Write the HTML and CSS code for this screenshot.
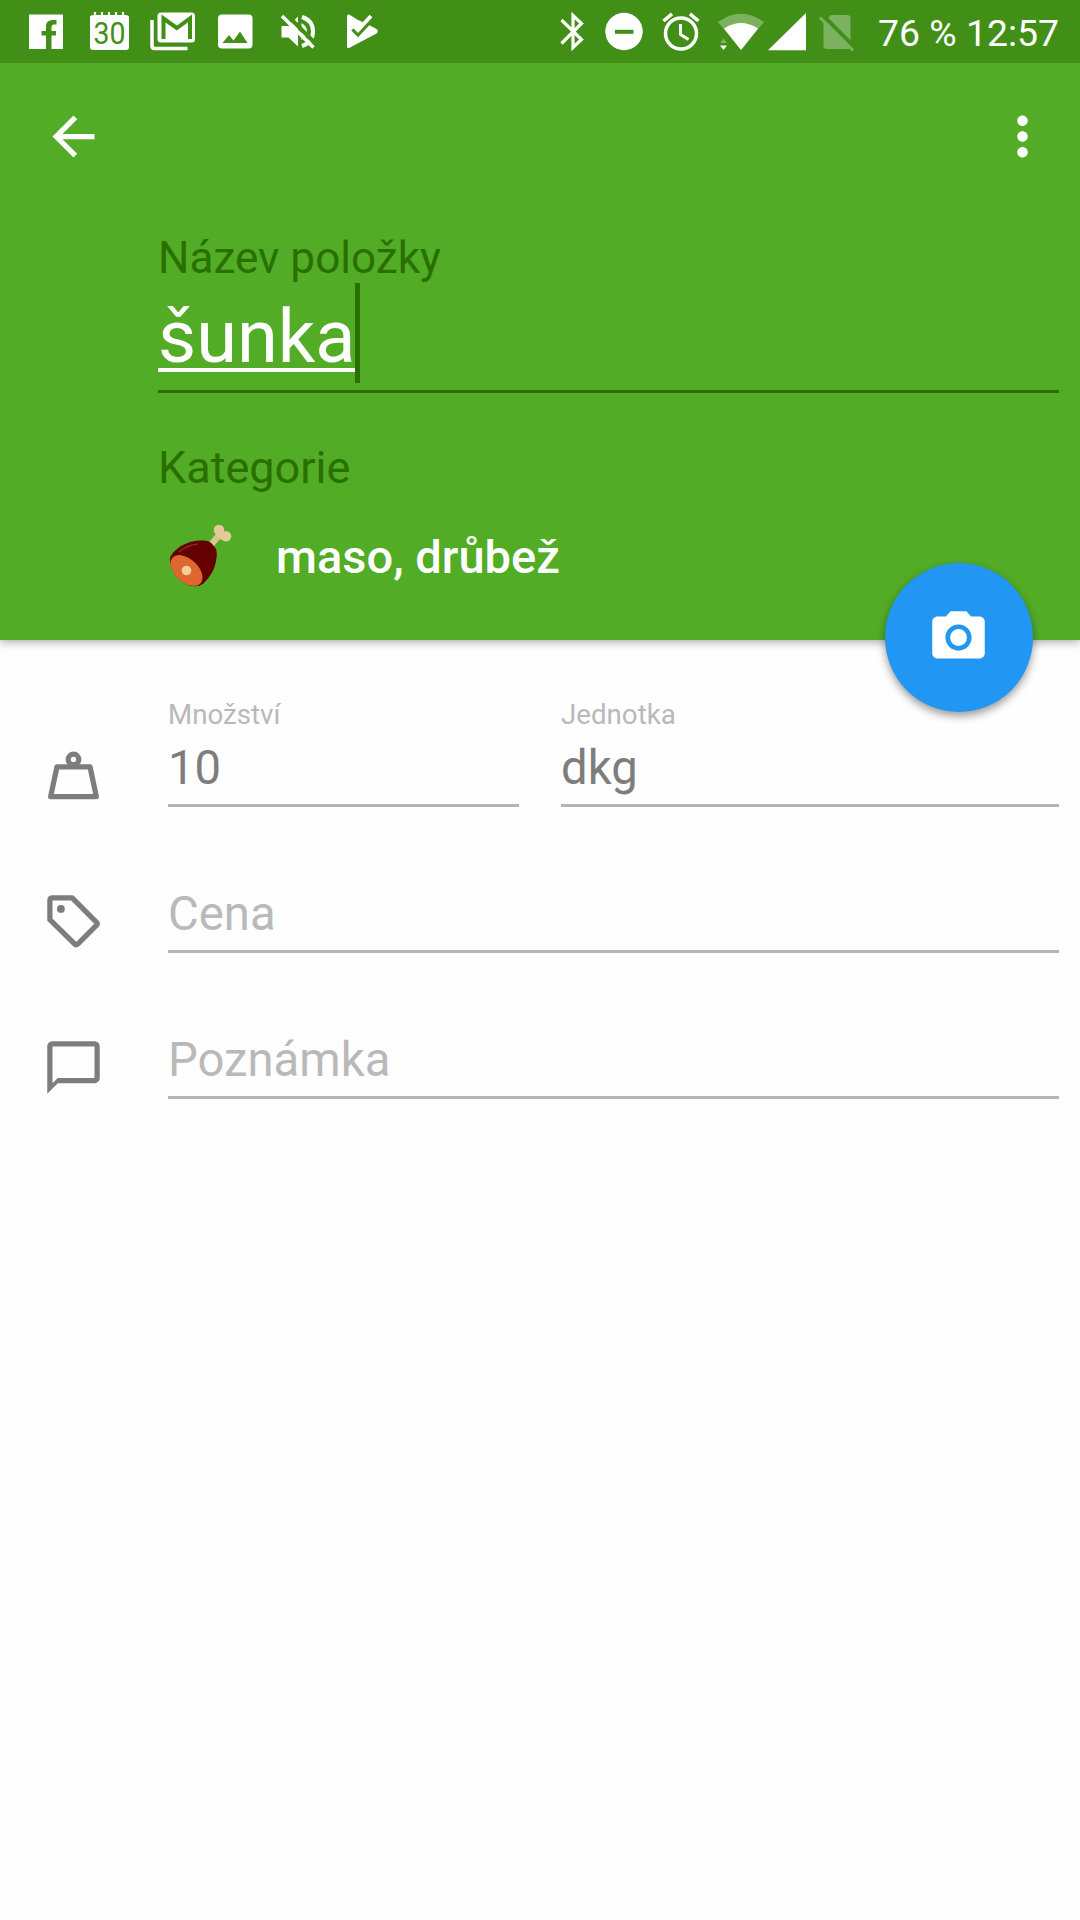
FILE: index.html
```html
<!DOCTYPE html>
<html lang="cs">
<head>
    <meta charset="UTF-8">
    <meta name="viewport" content="width=device-width, initial-scale=1.0">
    <title>Položka</title>
    <link rel="stylesheet" href="styles.css">
</head>
<body>
    <header class="header">
        <div class="status-bar">
            <div class="status-left">
                <svg viewBox="0 0 63 63"><path fill="#fff" d="M14 14.500h34v34.500h-11.500v-13.500h4.500v-4.500h-4.500v-3.500q0-3 2.500-3h2.500v-4.500h-4q-6.500 0-6.500 6.500v4.500h-4.500v4.500h4.500v13.500h-17z"/></svg>
                <svg viewBox="0 0 63 63">
                    <path fill="#fff" d="M16 15h31q4 0 4 2v30q0 3-3 3H15q-3 0-3-3V17q0-2 4-2z"/>
                    <path stroke="#fff" stroke-width="2.200" d="M17 12v4M24 12v4M31 12v4M38 12v4M45 12v4"/>
                    <text x="15.500" y="44" textLength="32" lengthAdjust="spacingAndGlyphs" class="cal-day">30</text>
                </svg>
                <svg viewBox="0 0 63 63">
                    <rect x="16.500" y="12.500" width="37.500" height="30" rx="3.500" fill="#fff"/>
                    <path fill="none" stroke="#fff" stroke-width="3.500" d="M11 20v26q0 2.500 2.500 2.500H46.500"/>
                    <path fill="none" stroke="#428f18" stroke-width="4" d="M22.500 39V18.500l13.300 9.500 13.200-9.500V39"/>
                </svg>
                <svg viewBox="0 0 63 63">
                    <rect x="14" y="14.500" width="34.500" height="34" rx="4" fill="#fff"/>
                    <path fill="#428f18" d="M18.500 43l6.500-8 4.500 5.500 6.500-9 7.500 11.500z"/>
                </svg>
                <svg viewBox="0 0 63 63">
                    <path fill="#fff" d="M14.500 26h7l9.500-9.500V46.500l-9.500-9h-7z"/>
                    <path fill="none" stroke="#fff" stroke-width="4" d="M35 17q11 3.500 11 14.500T35 46"/>
                    <path fill="#fff" d="M34.500 23q5.500 3 5.500 8.500t-5.500 8.500z"/>
                    <path stroke="#428f18" stroke-width="4" d="M18 13l32 32"/>
                    <path stroke="#fff" stroke-width="3.500" d="M15 16l31.500 31.500"/>
                </svg>
                <svg viewBox="0 0 63 63">
                    <path fill="#fff" d="M17 16.500q0-3 3-1.500l8 5 9 4 9.500 5q2.500 2 0 4.500L20 47.500q-3 2-3-1.500z"/>
                    <path fill="none" stroke="#428f18" stroke-width="3.500" d="M22.500 29.300l5.500 5.500 14.500-15.500"/>
                    <path fill="none" stroke="#fff" stroke-width="4" d="M23 25l5 5L41 16"/>
                </svg>
            </div>
            <div class="status-right">
                <svg class="bluetooth" viewBox="0 0 24 63"><path fill="none" stroke="#fff" stroke-width="3.200" d="M1.500 20l20 19.500-8.500 8V15.500l8.500 8L1.500 43.500"/></svg>
                <svg class="dnd" viewBox="0 0 38 63"><circle cx="19" cy="31.500" r="18.700" fill="#fff"/><path stroke="#428f18" stroke-width="4" d="M10 31.800h18.500"/></svg>
                <svg class="alarm" viewBox="0 0 38 63">
                    <circle cx="19" cy="33.500" r="15.500" fill="none" stroke="#fff" stroke-width="3.500"/>
                    <path fill="none" stroke="#fff" stroke-width="3" d="M18.500 24v10.500l8 5"/>
                    <path stroke="#fff" stroke-width="3.500" d="M1.500 21l8.500-7.200M36.500 21L28 13.800"/>
                </svg>
                <svg class="wifi" viewBox="0 0 46 63">
                    <path fill="#7cb25f" d="M0 22q23-16.500 46 0L23 50z"/>
                    <path fill="#fff" d="M6 28.500q17-11 34 0L23 50z"/>
                    <path fill="#7cb25f" d="M2 43l3.500-4.500L9 43z"/><path fill="#fff" d="M2 45.500h7L5.500 50z"/>
                </svg>
                <svg class="signal" viewBox="0 0 38 63"><path fill="#fff" d="M38 13v37.200H0z"/></svg>
                <svg class="sim" viewBox="0 0 36 63">
                    <path fill="#7cb25f" d="M12 15h16q3.500 0 3.500 3.500V46q0 3-3 3h-21q-3 0-3-3V23z"/>
                    <path stroke="#428f18" stroke-width="4" d="M3 14.500l34 34"/>
                    <path stroke="#7cb25f" stroke-width="3" d="M1 17.500l33 33"/>
                </svg>
                <span class="clock">76 % 12:57</span>
            </div>
        </div>

        <div class="toolbar">
            <svg class="icon" viewBox="0 0 24 24"><path fill="#fff" d="M20 11H7.830l5.590-5.590L12 4l-8 8 8 8 1.410-1.410L7.830 13H20v-2z"/></svg>
            <svg class="icon" viewBox="0 0 24 24"><path fill="#fff" d="M12 8c1.100 0 2-.9 2-2s-.9-2-2-2-2 .9-2 2 .9 2 2 2zm0 2c-1.100 0-2 .9-2 2s.9 2 2 2 2-.9 2-2-.9-2-2-2zm0 6c-1.100 0-2 .9-2 2s.9 2 2 2 2-.9 2-2-.9-2-2-2z"/></svg>
        </div>

        <div class="item">
            <div class="item-label">Název položky</div>
            <div class="item-name"><span class="typed">šunka</span></div>
            <div class="item-label category-label">Kategorie</div>
            <div class="category">
                <svg class="icon" viewBox="0 0 63 63">
                    <path stroke="#dfc493" stroke-width="6.500" d="M41 22l10-12"/>
                    <circle cx="50" cy="6" r="5.300" fill="#e6c99a"/>
                    <circle cx="57" cy="12.200" r="5.300" fill="#e6c99a"/>
                    <path fill="#e6c99a" d="M48 11l5-5 6 6-7 4z"/>
                    <path fill="#600" d="M1 34C5 24 19 16 34 16.500q7 0 9.500 4Q49 25 47.500 34C46 46 41 53 34 60q-6 4-15 1Q1 52 1 34z"/>
                    <path fill="none" stroke="#842b2b" stroke-width="1.500" d="M10 28q8-7 19-8"/>
                    <ellipse cx="17.500" cy="46.500" rx="19" ry="11.500" transform="rotate(43 17.500 46.500)" fill="#dd672f"/>
                    <circle cx="17.500" cy="46.500" r="4.800" fill="#f5cd9b"/>
                </svg>
                <span class="category-name">maso, drůbež</span>
            </div>
        </div>

        <button class="fab" type="button" aria-label="Foto">
            <svg class="icon" viewBox="0 0 24 24"><circle cx="12" cy="12" r="3.200" fill="#fff"/><path fill="#fff" d="M9 2L7.170 4H4c-1.100 0-2 .9-2 2v12c0 1.100.9 2 2 2h16c1.100 0 2-.9 2-2V6c0-1.100-.9-2-2-2h-3.170L15 2H9zm3 15c-2.760 0-5-2.240-5-5s2.240-5 5-5 5 2.240 5 5-2.240 5-5 5z"/></svg>
        </button>
    </header>

    <form class="details">
        <div class="form-row">
            <svg class="icon" viewBox="0 0 24 24"><g fill="none" stroke="#7d7d7d" stroke-width="2" stroke-linejoin="round"><circle cx="12" cy="5.900" r="2"/><path d="M5.700 8.700h12.600L20.700 20H3.300z"/></g></svg>
            <label class="field amount">Množství<input type="text" value="10"></label>
            <label class="field unit">Jednotka<input type="text" value="dkg"></label>
        </div>
        <div class="form-row">
            <svg class="icon" viewBox="0 0 24 24"><path fill="none" stroke="#7d7d7d" stroke-width="2" stroke-linejoin="round" d="M3 4q0-1 1-1h7.500l9.300 9.300q.5.600 0 1.100l-7.200 7.200q-.6.500-1.100 0L3 11.300z"/><circle cx="7.200" cy="7.200" r="1.500" fill="#7d7d7d"/></svg>
            <label class="field"><input type="text" placeholder="Cena"></label>
        </div>
        <div class="form-row">
            <svg class="icon" viewBox="0 0 24 24"><path fill="#7d7d7d" d="M20 2H4c-1.100 0-2 .9-2 2v18l4-4h14c1.100 0 2-.9 2-2V4c0-1.100-.9-2-2-2zm0 14H6l-2 2V4h16v12z"/></svg>
            <label class="field"><input type="text" placeholder="Poznámka"></label>
        </div>
    </form>
</body>
</html>
```

FILE: styles.css
```css
* {
    box-sizing: border-box;
}
body {
    margin: 0;
    min-height: 1920px;
    background-color: #fefefe;
    font-family: Roboto, sans-serif;
}
svg {
    display: block;
    flex: none;
}
.icon {
    width: 63px;
    height: 63px;
}
.header {
    position: relative;
    height: 640px;
    background-color: #52ac26;
    box-shadow: 0 2px 9px rgba(0,0,0,0.35);
}
.status-bar {
    display: flex;
    justify-content: space-between;
    height: 63px;
    padding: 0 21px 0 15px;
    background-color: #428f18;
}
.status-left,
.status-right {
    display: flex;
}
.status-left svg {
    width: 63px;
    height: 63px;
}
.status-right svg {
    height: 63px;
}
.bluetooth {
    width: 24px;
    margin-right: 21px;
}
.dnd {
    width: 38px;
    margin-right: 19px;
}
.alarm {
    width: 38px;
    margin-right: 18px;
}
.wifi {
    width: 46px;
    margin-right: 4px;
}
.signal {
    width: 38px;
    margin-right: 13px;
}
.sim {
    width: 36px;
    margin-right: 23px;
}
.clock {
    color: #fff;
    font-size: 37.4px;
    line-height: 67px;
    white-space: nowrap;
}
.cal-day {
    fill: #428f18;
    font-size: 31px;
}
.toolbar {
    display: flex;
    justify-content: space-between;
    padding: 42px 26px 0 42px;
}
.item {
    padding: 64px 21px 0 158px;
}
.item-label {
    color: #297000;
    font-size: 44.1px;
    line-height: 52px;
}
.category-label {
    font-size: 45px;
}
.item-name {
    height: 109px;
    margin-bottom: 49px;
    border-bottom: 3px solid #297000;
    color: #fff;
    font-size: 74px;
    line-height: 106px;
}
.typed {
    position: relative;
    text-decoration: underline;
    text-decoration-thickness: 4px;
    text-underline-offset: 6px;
    text-decoration-skip-ink: none;
}
.typed::after {
    content: "";
    position: absolute;
    top: -10px;
    right: -4px;
    width: 5px;
    height: 100px;
    background-color: #297000;
}
.category {
    display: flex;
    gap: 44px;
    margin-top: 30px;
    padding-left: 11px;
}
.category-name {
    color: #fff;
    font-size: 47px;
    font-weight: 500;
    line-height: 65px;
}
.fab {
    position: absolute;
    right: 47px;
    bottom: -72px;
    display: flex;
    align-items: center;
    justify-content: center;
    width: 148px;
    height: 149px;
    padding: 0 1px 1px 0;
    border: none;
    border-radius: 50%;
    background-color: #2196f3;
    box-shadow: 0 4px 9px rgba(0,0,0,0.4);
}
.details {
    display: flex;
    flex-direction: column;
    gap: 71px;
    padding: 58px 21px 0 42px;
}
.form-row {
    display: flex;
    align-items: flex-end;
}
.form-row .icon {
    margin-right: 63px;
}
.field {
    flex: 1;
    color: #b9b9b9;
    font-size: 27.7px;
    line-height: 34px;
}
.amount {
    flex: none;
    width: 351px;
    margin-right: 42px;
}
.field input {
    display: block;
    width: 100%;
    height: 75px;
    padding: 0;
    border: none;
    border-bottom: 3px solid #b4b4b4;
    border-radius: 0;
    outline: none;
    background: none;
    color: #7d7d7d;
    font-family: inherit;
    font-size: 47.25px;
}
.field input::placeholder {
    color: #b9b9b9;
}
```
